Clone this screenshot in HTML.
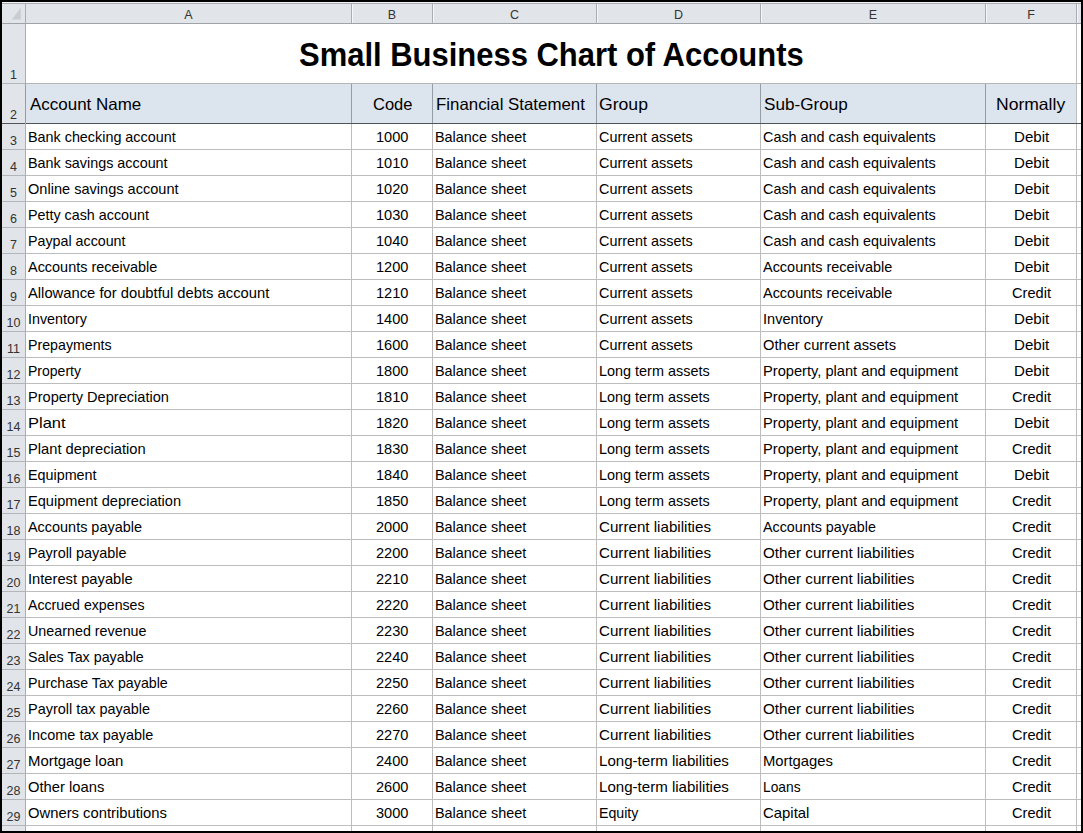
<!DOCTYPE html><html><head><meta charset="utf-8"><style>
*{margin:0;padding:0;box-sizing:border-box}
html,body{width:1083px;height:833px;overflow:hidden;background:#000}
body{position:relative;font-family:"Liberation Sans",sans-serif;color:#000}
.a{position:absolute}
.h{position:absolute;height:1px}
.v{position:absolute;width:1px}
.t{position:absolute;white-space:nowrap;line-height:1;transform-origin:0 0}
.c{position:absolute;white-space:nowrap;line-height:1;text-align:center}
.d{font-size:14.5px;color:#000;-webkit-text-stroke:0px #000}
.hh{font-size:16.5px;color:#000}
.tt{font-size:32.5px;font-weight:bold;color:#000}

</style></head><body>
<div class="a" style="left:2px;top:2px;width:1079px;height:829px;background:#fff"></div>
<div class="a" style="left:2px;top:2px;width:1079px;height:21px;background:#e1e4e8"></div>
<div class="h" style="left:2px;top:2px;width:1079px;background:#f4f5f7"></div>
<div class="h" style="left:2px;top:3px;width:1079px;background:#a9adb2"></div>
<div class="a" style="left:2px;top:23px;width:23px;height:808px;background:#e1e4e8"></div>
<div class="a" style="left:26px;top:83px;width:1050px;height:40px;background:#dce4ee"></div>
<div class="v" style="left:351px;top:123px;height:708px;background:#bdbdbd"></div>
<div class="v" style="left:351px;top:84px;height:39px;background:#949ca5"></div>
<div class="v" style="left:351px;top:4px;height:19px;background:#a9adb2"></div>
<div class="v" style="left:352px;top:4px;height:19px;background:#f6f7f9"></div>
<div class="v" style="left:432px;top:123px;height:708px;background:#bdbdbd"></div>
<div class="v" style="left:432px;top:84px;height:39px;background:#949ca5"></div>
<div class="v" style="left:432px;top:4px;height:19px;background:#a9adb2"></div>
<div class="v" style="left:433px;top:4px;height:19px;background:#f6f7f9"></div>
<div class="v" style="left:596px;top:123px;height:708px;background:#bdbdbd"></div>
<div class="v" style="left:596px;top:84px;height:39px;background:#949ca5"></div>
<div class="v" style="left:596px;top:4px;height:19px;background:#a9adb2"></div>
<div class="v" style="left:597px;top:4px;height:19px;background:#f6f7f9"></div>
<div class="v" style="left:760px;top:123px;height:708px;background:#bdbdbd"></div>
<div class="v" style="left:760px;top:84px;height:39px;background:#949ca5"></div>
<div class="v" style="left:760px;top:4px;height:19px;background:#a9adb2"></div>
<div class="v" style="left:761px;top:4px;height:19px;background:#f6f7f9"></div>
<div class="v" style="left:985px;top:123px;height:708px;background:#bdbdbd"></div>
<div class="v" style="left:985px;top:84px;height:39px;background:#949ca5"></div>
<div class="v" style="left:985px;top:4px;height:19px;background:#a9adb2"></div>
<div class="v" style="left:986px;top:4px;height:19px;background:#f6f7f9"></div>
<div class="v" style="left:1076px;top:123px;height:708px;background:#bdbdbd"></div>
<div class="v" style="left:1076px;top:84px;height:39px;background:#bdbdbd"></div>
<div class="v" style="left:1076px;top:4px;height:19px;background:#a9adb2"></div>
<div class="v" style="left:1077px;top:4px;height:19px;background:#f6f7f9"></div>
<div class="v" style="left:1076px;top:24px;height:59px;background:#bdbdbd"></div>
<div class="h" style="left:2px;top:23px;width:1079px;background:#9ea3a9"></div>
<div class="h" style="left:26px;top:83px;width:1055px;background:#b3b6b9"></div>
<div class="h" style="left:2px;top:123px;width:1079px;background:#50555b"></div>
<div class="h" style="left:26px;top:149px;width:1055px;background:#bdbdbd"></div>
<div class="h" style="left:26px;top:175px;width:1055px;background:#bdbdbd"></div>
<div class="h" style="left:26px;top:201px;width:1055px;background:#bdbdbd"></div>
<div class="h" style="left:26px;top:227px;width:1055px;background:#bdbdbd"></div>
<div class="h" style="left:26px;top:253px;width:1055px;background:#bdbdbd"></div>
<div class="h" style="left:26px;top:279px;width:1055px;background:#bdbdbd"></div>
<div class="h" style="left:26px;top:305px;width:1055px;background:#bdbdbd"></div>
<div class="h" style="left:26px;top:331px;width:1055px;background:#bdbdbd"></div>
<div class="h" style="left:26px;top:357px;width:1055px;background:#bdbdbd"></div>
<div class="h" style="left:26px;top:383px;width:1055px;background:#bdbdbd"></div>
<div class="h" style="left:26px;top:409px;width:1055px;background:#bdbdbd"></div>
<div class="h" style="left:26px;top:435px;width:1055px;background:#bdbdbd"></div>
<div class="h" style="left:26px;top:461px;width:1055px;background:#bdbdbd"></div>
<div class="h" style="left:26px;top:487px;width:1055px;background:#bdbdbd"></div>
<div class="h" style="left:26px;top:513px;width:1055px;background:#bdbdbd"></div>
<div class="h" style="left:26px;top:539px;width:1055px;background:#bdbdbd"></div>
<div class="h" style="left:26px;top:565px;width:1055px;background:#bdbdbd"></div>
<div class="h" style="left:26px;top:591px;width:1055px;background:#bdbdbd"></div>
<div class="h" style="left:26px;top:617px;width:1055px;background:#bdbdbd"></div>
<div class="h" style="left:26px;top:643px;width:1055px;background:#bdbdbd"></div>
<div class="h" style="left:26px;top:669px;width:1055px;background:#bdbdbd"></div>
<div class="h" style="left:26px;top:695px;width:1055px;background:#bdbdbd"></div>
<div class="h" style="left:26px;top:721px;width:1055px;background:#bdbdbd"></div>
<div class="h" style="left:26px;top:747px;width:1055px;background:#bdbdbd"></div>
<div class="h" style="left:26px;top:773px;width:1055px;background:#bdbdbd"></div>
<div class="h" style="left:26px;top:799px;width:1055px;background:#bdbdbd"></div>
<div class="h" style="left:26px;top:825px;width:1055px;background:#bdbdbd"></div>
<div class="h" style="left:2px;top:83px;width:23px;background:#b2b6ba"></div>
<div class="h" style="left:2px;top:149px;width:23px;background:#b2b6ba"></div>
<div class="h" style="left:2px;top:175px;width:23px;background:#b2b6ba"></div>
<div class="h" style="left:2px;top:201px;width:23px;background:#b2b6ba"></div>
<div class="h" style="left:2px;top:227px;width:23px;background:#b2b6ba"></div>
<div class="h" style="left:2px;top:253px;width:23px;background:#b2b6ba"></div>
<div class="h" style="left:2px;top:279px;width:23px;background:#b2b6ba"></div>
<div class="h" style="left:2px;top:305px;width:23px;background:#b2b6ba"></div>
<div class="h" style="left:2px;top:331px;width:23px;background:#b2b6ba"></div>
<div class="h" style="left:2px;top:357px;width:23px;background:#b2b6ba"></div>
<div class="h" style="left:2px;top:383px;width:23px;background:#b2b6ba"></div>
<div class="h" style="left:2px;top:409px;width:23px;background:#b2b6ba"></div>
<div class="h" style="left:2px;top:435px;width:23px;background:#b2b6ba"></div>
<div class="h" style="left:2px;top:461px;width:23px;background:#b2b6ba"></div>
<div class="h" style="left:2px;top:487px;width:23px;background:#b2b6ba"></div>
<div class="h" style="left:2px;top:513px;width:23px;background:#b2b6ba"></div>
<div class="h" style="left:2px;top:539px;width:23px;background:#b2b6ba"></div>
<div class="h" style="left:2px;top:565px;width:23px;background:#b2b6ba"></div>
<div class="h" style="left:2px;top:591px;width:23px;background:#b2b6ba"></div>
<div class="h" style="left:2px;top:617px;width:23px;background:#b2b6ba"></div>
<div class="h" style="left:2px;top:643px;width:23px;background:#b2b6ba"></div>
<div class="h" style="left:2px;top:669px;width:23px;background:#b2b6ba"></div>
<div class="h" style="left:2px;top:695px;width:23px;background:#b2b6ba"></div>
<div class="h" style="left:2px;top:721px;width:23px;background:#b2b6ba"></div>
<div class="h" style="left:2px;top:747px;width:23px;background:#b2b6ba"></div>
<div class="h" style="left:2px;top:773px;width:23px;background:#b2b6ba"></div>
<div class="h" style="left:2px;top:799px;width:23px;background:#b2b6ba"></div>
<div class="h" style="left:2px;top:825px;width:23px;background:#b2b6ba"></div>
<div class="v" style="left:25px;top:4px;height:827px;background:#a9adb2"></div>
<div class="v" style="left:25px;top:84px;height:39px;background:#949ca5"></div>
<svg class="a" style="left:2px;top:2px" width="23" height="21"><polygon points="18.8,5.8 18.8,17.6 9.8,17.6" fill="#c9cdd3"/></svg>
<div class="c" style="left:148.5px;width:80px;top:9px;font-size:12.5px;color:#333">A</div>
<div class="c" style="left:352.0px;width:80px;top:9px;font-size:12.5px;color:#333">B</div>
<div class="c" style="left:474.5px;width:80px;top:9px;font-size:12.5px;color:#333">C</div>
<div class="c" style="left:638.5px;width:80px;top:9px;font-size:12.5px;color:#333">D</div>
<div class="c" style="left:833.0px;width:80px;top:9px;font-size:12.5px;color:#333">E</div>
<div class="c" style="left:991.0px;width:80px;top:9px;font-size:12.5px;color:#333">F</div>
<div class="c" style="left:2px;width:23px;top:69px;font-size:12.5px;color:#333">1</div>
<div class="c" style="left:2px;width:23px;top:109px;font-size:12.5px;color:#333">2</div>
<div class="c" style="left:2px;width:23px;top:135px;font-size:12.5px;color:#333">3</div>
<div class="c" style="left:2px;width:23px;top:161px;font-size:12.5px;color:#333">4</div>
<div class="c" style="left:2px;width:23px;top:187px;font-size:12.5px;color:#333">5</div>
<div class="c" style="left:2px;width:23px;top:213px;font-size:12.5px;color:#333">6</div>
<div class="c" style="left:2px;width:23px;top:239px;font-size:12.5px;color:#333">7</div>
<div class="c" style="left:2px;width:23px;top:265px;font-size:12.5px;color:#333">8</div>
<div class="c" style="left:2px;width:23px;top:291px;font-size:12.5px;color:#333">9</div>
<div class="c" style="left:2px;width:23px;top:317px;font-size:12.5px;color:#333">10</div>
<div class="c" style="left:2px;width:23px;top:343px;font-size:12.5px;color:#333">11</div>
<div class="c" style="left:2px;width:23px;top:369px;font-size:12.5px;color:#333">12</div>
<div class="c" style="left:2px;width:23px;top:395px;font-size:12.5px;color:#333">13</div>
<div class="c" style="left:2px;width:23px;top:421px;font-size:12.5px;color:#333">14</div>
<div class="c" style="left:2px;width:23px;top:447px;font-size:12.5px;color:#333">15</div>
<div class="c" style="left:2px;width:23px;top:473px;font-size:12.5px;color:#333">16</div>
<div class="c" style="left:2px;width:23px;top:499px;font-size:12.5px;color:#333">17</div>
<div class="c" style="left:2px;width:23px;top:525px;font-size:12.5px;color:#333">18</div>
<div class="c" style="left:2px;width:23px;top:551px;font-size:12.5px;color:#333">19</div>
<div class="c" style="left:2px;width:23px;top:577px;font-size:12.5px;color:#333">20</div>
<div class="c" style="left:2px;width:23px;top:603px;font-size:12.5px;color:#333">21</div>
<div class="c" style="left:2px;width:23px;top:629px;font-size:12.5px;color:#333">22</div>
<div class="c" style="left:2px;width:23px;top:655px;font-size:12.5px;color:#333">23</div>
<div class="c" style="left:2px;width:23px;top:681px;font-size:12.5px;color:#333">24</div>
<div class="c" style="left:2px;width:23px;top:707px;font-size:12.5px;color:#333">25</div>
<div class="c" style="left:2px;width:23px;top:733px;font-size:12.5px;color:#333">26</div>
<div class="c" style="left:2px;width:23px;top:759px;font-size:12.5px;color:#333">27</div>
<div class="c" style="left:2px;width:23px;top:785px;font-size:12.5px;color:#333">28</div>
<div class="c" style="left:2px;width:23px;top:811px;font-size:12.5px;color:#333">29</div>
<div class="t d" style="left:28.30px;top:129.96px;transform:scaleX(0.9900)">Bank checking account</div>
<div class="t d" style="left:375.90px;top:129.96px;transform:scaleX(1.0055)">1000</div>
<div class="t d" style="left:435.30px;top:129.96px;transform:scaleX(0.9928)">Balance sheet</div>
<div class="t d" style="left:598.60px;top:129.96px;transform:scaleX(0.9929)">Current assets</div>
<div class="t d" style="left:762.50px;top:129.96px;transform:scaleX(0.9923)">Cash and cash equivalents</div>
<div class="t d" style="left:1013.90px;top:129.96px;transform:scaleX(1.0398)">Debit</div>
<div class="t d" style="left:28.30px;top:155.96px;transform:scaleX(0.9896)">Bank savings account</div>
<div class="t d" style="left:375.90px;top:155.96px;transform:scaleX(1.0055)">1010</div>
<div class="t d" style="left:435.30px;top:155.96px;transform:scaleX(0.9928)">Balance sheet</div>
<div class="t d" style="left:598.60px;top:155.96px;transform:scaleX(0.9929)">Current assets</div>
<div class="t d" style="left:762.50px;top:155.96px;transform:scaleX(0.9923)">Cash and cash equivalents</div>
<div class="t d" style="left:1013.90px;top:155.96px;transform:scaleX(1.0398)">Debit</div>
<div class="t d" style="left:27.80px;top:181.96px;transform:scaleX(1.0042)">Online savings account</div>
<div class="t d" style="left:375.90px;top:181.96px;transform:scaleX(1.0055)">1020</div>
<div class="t d" style="left:435.30px;top:181.96px;transform:scaleX(0.9928)">Balance sheet</div>
<div class="t d" style="left:598.60px;top:181.96px;transform:scaleX(0.9929)">Current assets</div>
<div class="t d" style="left:762.50px;top:181.96px;transform:scaleX(0.9923)">Cash and cash equivalents</div>
<div class="t d" style="left:1013.90px;top:181.96px;transform:scaleX(1.0398)">Debit</div>
<div class="t d" style="left:28.30px;top:207.96px;transform:scaleX(0.9870)">Petty cash account</div>
<div class="t d" style="left:375.90px;top:207.96px;transform:scaleX(1.0055)">1030</div>
<div class="t d" style="left:435.30px;top:207.96px;transform:scaleX(0.9928)">Balance sheet</div>
<div class="t d" style="left:598.60px;top:207.96px;transform:scaleX(0.9929)">Current assets</div>
<div class="t d" style="left:762.50px;top:207.96px;transform:scaleX(0.9923)">Cash and cash equivalents</div>
<div class="t d" style="left:1013.90px;top:207.96px;transform:scaleX(1.0398)">Debit</div>
<div class="t d" style="left:28.30px;top:233.96px;transform:scaleX(0.9835)">Paypal account</div>
<div class="t d" style="left:375.90px;top:233.96px;transform:scaleX(1.0055)">1040</div>
<div class="t d" style="left:435.30px;top:233.96px;transform:scaleX(0.9928)">Balance sheet</div>
<div class="t d" style="left:598.60px;top:233.96px;transform:scaleX(0.9929)">Current assets</div>
<div class="t d" style="left:762.50px;top:233.96px;transform:scaleX(0.9923)">Cash and cash equivalents</div>
<div class="t d" style="left:1013.90px;top:233.96px;transform:scaleX(1.0398)">Debit</div>
<div class="t d" style="left:28.30px;top:259.96px;transform:scaleX(0.9957)">Accounts receivable</div>
<div class="t d" style="left:375.90px;top:259.96px;transform:scaleX(1.0055)">1200</div>
<div class="t d" style="left:435.30px;top:259.96px;transform:scaleX(0.9928)">Balance sheet</div>
<div class="t d" style="left:598.60px;top:259.96px;transform:scaleX(0.9929)">Current assets</div>
<div class="t d" style="left:763.40px;top:259.96px;transform:scaleX(0.9968)">Accounts receivable</div>
<div class="t d" style="left:1013.90px;top:259.96px;transform:scaleX(1.0398)">Debit</div>
<div class="t d" style="left:28.30px;top:285.96px;transform:scaleX(1.0180)">Allowance for doubtful debts account</div>
<div class="t d" style="left:375.90px;top:285.96px;transform:scaleX(1.0055)">1210</div>
<div class="t d" style="left:435.30px;top:285.96px;transform:scaleX(0.9928)">Balance sheet</div>
<div class="t d" style="left:598.60px;top:285.96px;transform:scaleX(0.9929)">Current assets</div>
<div class="t d" style="left:763.40px;top:285.96px;transform:scaleX(0.9968)">Accounts receivable</div>
<div class="t d" style="left:1011.90px;top:285.96px;transform:scaleX(1.0066)">Credit</div>
<div class="t d" style="left:28.30px;top:311.96px;transform:scaleX(0.9866)">Inventory</div>
<div class="t d" style="left:375.90px;top:311.96px;transform:scaleX(1.0055)">1400</div>
<div class="t d" style="left:435.30px;top:311.96px;transform:scaleX(0.9928)">Balance sheet</div>
<div class="t d" style="left:598.60px;top:311.96px;transform:scaleX(0.9929)">Current assets</div>
<div class="t d" style="left:763.30px;top:311.96px;transform:scaleX(1.0038)">Inventory</div>
<div class="t d" style="left:1013.90px;top:311.96px;transform:scaleX(1.0398)">Debit</div>
<div class="t d" style="left:28.30px;top:337.96px;transform:scaleX(0.9790)">Prepayments</div>
<div class="t d" style="left:375.90px;top:337.96px;transform:scaleX(1.0055)">1600</div>
<div class="t d" style="left:435.30px;top:337.96px;transform:scaleX(0.9928)">Balance sheet</div>
<div class="t d" style="left:598.60px;top:337.96px;transform:scaleX(0.9929)">Current assets</div>
<div class="t d" style="left:762.80px;top:337.96px;transform:scaleX(1.0125)">Other current assets</div>
<div class="t d" style="left:1013.90px;top:337.96px;transform:scaleX(1.0398)">Debit</div>
<div class="t d" style="left:28.30px;top:363.96px;transform:scaleX(0.9661)">Property</div>
<div class="t d" style="left:375.90px;top:363.96px;transform:scaleX(1.0055)">1800</div>
<div class="t d" style="left:435.30px;top:363.96px;transform:scaleX(0.9928)">Balance sheet</div>
<div class="t d" style="left:599.30px;top:363.96px;transform:scaleX(0.9946)">Long term assets</div>
<div class="t d" style="left:763.30px;top:363.96px;transform:scaleX(1.0103)">Property, plant and equipment</div>
<div class="t d" style="left:1013.90px;top:363.96px;transform:scaleX(1.0398)">Debit</div>
<div class="t d" style="left:28.30px;top:389.96px;transform:scaleX(1.0045)">Property Depreciation</div>
<div class="t d" style="left:375.90px;top:389.96px;transform:scaleX(1.0055)">1810</div>
<div class="t d" style="left:435.30px;top:389.96px;transform:scaleX(0.9928)">Balance sheet</div>
<div class="t d" style="left:599.30px;top:389.96px;transform:scaleX(0.9946)">Long term assets</div>
<div class="t d" style="left:763.30px;top:389.96px;transform:scaleX(1.0103)">Property, plant and equipment</div>
<div class="t d" style="left:1011.90px;top:389.96px;transform:scaleX(1.0066)">Credit</div>
<div class="t d" style="left:28.30px;top:415.96px;transform:scaleX(1.1375)">Plant</div>
<div class="t d" style="left:375.90px;top:415.96px;transform:scaleX(1.0055)">1820</div>
<div class="t d" style="left:435.30px;top:415.96px;transform:scaleX(0.9928)">Balance sheet</div>
<div class="t d" style="left:599.30px;top:415.96px;transform:scaleX(0.9946)">Long term assets</div>
<div class="t d" style="left:763.30px;top:415.96px;transform:scaleX(1.0103)">Property, plant and equipment</div>
<div class="t d" style="left:1013.90px;top:415.96px;transform:scaleX(1.0398)">Debit</div>
<div class="t d" style="left:28.30px;top:441.96px;transform:scaleX(1.0137)">Plant depreciation</div>
<div class="t d" style="left:375.90px;top:441.96px;transform:scaleX(1.0055)">1830</div>
<div class="t d" style="left:435.30px;top:441.96px;transform:scaleX(0.9928)">Balance sheet</div>
<div class="t d" style="left:599.30px;top:441.96px;transform:scaleX(0.9946)">Long term assets</div>
<div class="t d" style="left:763.30px;top:441.96px;transform:scaleX(1.0103)">Property, plant and equipment</div>
<div class="t d" style="left:1011.90px;top:441.96px;transform:scaleX(1.0066)">Credit</div>
<div class="t d" style="left:28.30px;top:467.96px;transform:scaleX(0.9889)">Equipment</div>
<div class="t d" style="left:375.90px;top:467.96px;transform:scaleX(1.0055)">1840</div>
<div class="t d" style="left:435.30px;top:467.96px;transform:scaleX(0.9928)">Balance sheet</div>
<div class="t d" style="left:599.30px;top:467.96px;transform:scaleX(0.9946)">Long term assets</div>
<div class="t d" style="left:763.30px;top:467.96px;transform:scaleX(1.0103)">Property, plant and equipment</div>
<div class="t d" style="left:1013.90px;top:467.96px;transform:scaleX(1.0398)">Debit</div>
<div class="t d" style="left:28.30px;top:493.96px;transform:scaleX(1.0045)">Equipment depreciation</div>
<div class="t d" style="left:375.90px;top:493.96px;transform:scaleX(1.0055)">1850</div>
<div class="t d" style="left:435.30px;top:493.96px;transform:scaleX(0.9928)">Balance sheet</div>
<div class="t d" style="left:599.30px;top:493.96px;transform:scaleX(0.9946)">Long term assets</div>
<div class="t d" style="left:763.30px;top:493.96px;transform:scaleX(1.0103)">Property, plant and equipment</div>
<div class="t d" style="left:1011.90px;top:493.96px;transform:scaleX(1.0066)">Credit</div>
<div class="t d" style="left:28.30px;top:519.96px;transform:scaleX(0.9952)">Accounts payable</div>
<div class="t d" style="left:375.90px;top:519.96px;transform:scaleX(1.0055)">2000</div>
<div class="t d" style="left:435.30px;top:519.96px;transform:scaleX(0.9928)">Balance sheet</div>
<div class="t d" style="left:598.60px;top:519.96px;transform:scaleX(1.0447)">Current liabilities</div>
<div class="t d" style="left:763.40px;top:519.96px;transform:scaleX(0.9865)">Accounts payable</div>
<div class="t d" style="left:1011.90px;top:519.96px;transform:scaleX(1.0066)">Credit</div>
<div class="t d" style="left:28.30px;top:545.96px;transform:scaleX(0.9937)">Payroll payable</div>
<div class="t d" style="left:375.90px;top:545.96px;transform:scaleX(1.0055)">2200</div>
<div class="t d" style="left:435.30px;top:545.96px;transform:scaleX(0.9928)">Balance sheet</div>
<div class="t d" style="left:598.60px;top:545.96px;transform:scaleX(1.0447)">Current liabilities</div>
<div class="t d" style="left:762.80px;top:545.96px;transform:scaleX(1.0491)">Other current liabilities</div>
<div class="t d" style="left:1011.90px;top:545.96px;transform:scaleX(1.0066)">Credit</div>
<div class="t d" style="left:28.30px;top:571.96px;transform:scaleX(1.0147)">Interest payable</div>
<div class="t d" style="left:375.90px;top:571.96px;transform:scaleX(1.0055)">2210</div>
<div class="t d" style="left:435.30px;top:571.96px;transform:scaleX(0.9928)">Balance sheet</div>
<div class="t d" style="left:598.60px;top:571.96px;transform:scaleX(1.0447)">Current liabilities</div>
<div class="t d" style="left:762.80px;top:571.96px;transform:scaleX(1.0491)">Other current liabilities</div>
<div class="t d" style="left:1011.90px;top:571.96px;transform:scaleX(1.0066)">Credit</div>
<div class="t d" style="left:28.30px;top:597.96px;transform:scaleX(0.9771)">Accrued expenses</div>
<div class="t d" style="left:375.90px;top:597.96px;transform:scaleX(1.0055)">2220</div>
<div class="t d" style="left:435.30px;top:597.96px;transform:scaleX(0.9928)">Balance sheet</div>
<div class="t d" style="left:598.60px;top:597.96px;transform:scaleX(1.0447)">Current liabilities</div>
<div class="t d" style="left:762.80px;top:597.96px;transform:scaleX(1.0491)">Other current liabilities</div>
<div class="t d" style="left:1011.90px;top:597.96px;transform:scaleX(1.0066)">Credit</div>
<div class="t d" style="left:28.30px;top:623.96px;transform:scaleX(0.9867)">Unearned revenue</div>
<div class="t d" style="left:375.90px;top:623.96px;transform:scaleX(1.0055)">2230</div>
<div class="t d" style="left:435.30px;top:623.96px;transform:scaleX(0.9928)">Balance sheet</div>
<div class="t d" style="left:598.60px;top:623.96px;transform:scaleX(1.0447)">Current liabilities</div>
<div class="t d" style="left:762.80px;top:623.96px;transform:scaleX(1.0491)">Other current liabilities</div>
<div class="t d" style="left:1011.90px;top:623.96px;transform:scaleX(1.0066)">Credit</div>
<div class="t d" style="left:27.80px;top:649.96px;transform:scaleX(0.9860)">Sales Tax payable</div>
<div class="t d" style="left:375.90px;top:649.96px;transform:scaleX(1.0055)">2240</div>
<div class="t d" style="left:435.30px;top:649.96px;transform:scaleX(0.9928)">Balance sheet</div>
<div class="t d" style="left:598.60px;top:649.96px;transform:scaleX(1.0447)">Current liabilities</div>
<div class="t d" style="left:762.80px;top:649.96px;transform:scaleX(1.0491)">Other current liabilities</div>
<div class="t d" style="left:1011.90px;top:649.96px;transform:scaleX(1.0066)">Credit</div>
<div class="t d" style="left:28.30px;top:675.96px;transform:scaleX(0.9816)">Purchase Tax payable</div>
<div class="t d" style="left:375.90px;top:675.96px;transform:scaleX(1.0055)">2250</div>
<div class="t d" style="left:435.30px;top:675.96px;transform:scaleX(0.9928)">Balance sheet</div>
<div class="t d" style="left:598.60px;top:675.96px;transform:scaleX(1.0447)">Current liabilities</div>
<div class="t d" style="left:762.80px;top:675.96px;transform:scaleX(1.0491)">Other current liabilities</div>
<div class="t d" style="left:1011.90px;top:675.96px;transform:scaleX(1.0066)">Credit</div>
<div class="t d" style="left:28.30px;top:701.96px;transform:scaleX(0.9957)">Payroll tax payable</div>
<div class="t d" style="left:375.90px;top:701.96px;transform:scaleX(1.0055)">2260</div>
<div class="t d" style="left:435.30px;top:701.96px;transform:scaleX(0.9928)">Balance sheet</div>
<div class="t d" style="left:598.60px;top:701.96px;transform:scaleX(1.0447)">Current liabilities</div>
<div class="t d" style="left:762.80px;top:701.96px;transform:scaleX(1.0491)">Other current liabilities</div>
<div class="t d" style="left:1011.90px;top:701.96px;transform:scaleX(1.0066)">Credit</div>
<div class="t d" style="left:28.30px;top:727.96px;transform:scaleX(0.9962)">Income tax payable</div>
<div class="t d" style="left:375.90px;top:727.96px;transform:scaleX(1.0055)">2270</div>
<div class="t d" style="left:435.30px;top:727.96px;transform:scaleX(0.9928)">Balance sheet</div>
<div class="t d" style="left:598.60px;top:727.96px;transform:scaleX(1.0447)">Current liabilities</div>
<div class="t d" style="left:762.80px;top:727.96px;transform:scaleX(1.0491)">Other current liabilities</div>
<div class="t d" style="left:1011.90px;top:727.96px;transform:scaleX(1.0066)">Credit</div>
<div class="t d" style="left:28.30px;top:753.96px;transform:scaleX(1.0274)">Mortgage loan</div>
<div class="t d" style="left:375.90px;top:753.96px;transform:scaleX(1.0055)">2400</div>
<div class="t d" style="left:435.30px;top:753.96px;transform:scaleX(0.9928)">Balance sheet</div>
<div class="t d" style="left:599.30px;top:753.96px;transform:scaleX(1.0396)">Long-term liabilities</div>
<div class="t d" style="left:762.90px;top:753.96px;transform:scaleX(1.0211)">Mortgages</div>
<div class="t d" style="left:1011.90px;top:753.96px;transform:scaleX(1.0066)">Credit</div>
<div class="t d" style="left:27.80px;top:779.96px;transform:scaleX(1.0184)">Other loans</div>
<div class="t d" style="left:375.90px;top:779.96px;transform:scaleX(1.0055)">2600</div>
<div class="t d" style="left:435.30px;top:779.96px;transform:scaleX(0.9928)">Balance sheet</div>
<div class="t d" style="left:599.30px;top:779.96px;transform:scaleX(1.0396)">Long-term liabilities</div>
<div class="t d" style="left:763.30px;top:779.96px;transform:scaleX(0.9498)">Loans</div>
<div class="t d" style="left:1011.90px;top:779.96px;transform:scaleX(1.0066)">Credit</div>
<div class="t d" style="left:27.80px;top:805.96px;transform:scaleX(1.0204)">Owners contributions</div>
<div class="t d" style="left:375.90px;top:805.96px;transform:scaleX(1.0055)">3000</div>
<div class="t d" style="left:435.30px;top:805.96px;transform:scaleX(0.9928)">Balance sheet</div>
<div class="t d" style="left:599.30px;top:805.96px;transform:scaleX(0.9777)">Equity</div>
<div class="t d" style="left:762.50px;top:805.96px;transform:scaleX(1.0280)">Capital</div>
<div class="t d" style="left:1011.90px;top:805.96px;transform:scaleX(1.0066)">Credit</div>
<div class="t hh" style="left:29.60px;top:96.07px;transform:scaleX(1.0281)">Account Name</div>
<div class="t hh" style="left:372.70px;top:96.07px;transform:scaleX(1.0014)">Code</div>
<div class="t hh" style="left:436.10px;top:96.07px;transform:scaleX(1.0207)">Financial Statement</div>
<div class="t hh" style="left:599.30px;top:96.07px;transform:scaleX(1.0669)">Group</div>
<div class="t hh" style="left:763.50px;top:96.07px;transform:scaleX(1.0377)">Sub-Group</div>
<div class="t hh" style="left:995.90px;top:96.07px;transform:scaleX(1.0627)">Normally</div>
<div class="t tt" style="left:299.00px;top:39.19px;transform:scaleX(0.9527)">Small Business Chart of Accounts</div>
</body></html>
